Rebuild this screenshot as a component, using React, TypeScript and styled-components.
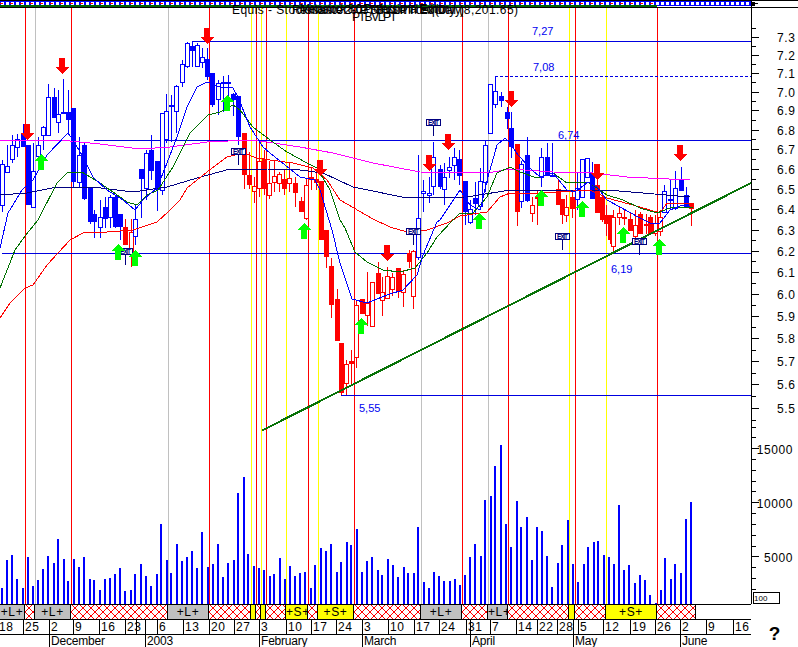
import React from "react";
import styled, { createGlobalStyle } from "styled-components";

const Global = createGlobalStyle`
  html, body { margin: 0; padding: 0; background: #fff; overflow: hidden; }
`;

const FONT = `"Liberation Sans", Arial, sans-serif`;
const PLOT_W = 751;
const PLOT_H = 604;
const BLUE = "#0000ff";
const LINE_BLUE = "#0000e0";
const RED = "#ff0000";
const NAVY = "#000080";
const LIME = "#00ff00";

type Kind = "b" | "o" | "r" | "p";
type Candle = [number, number, number, number, number, Kind];

const candles: Candle[] = [
  [2, 160, 212, 164, 205, "o"], [7, 145, 172, 166, 172, "o"], [12, 135, 163, 145, 159, "o"], [17, 134, 157, 139, 147, "o"],
  [23, 124, 147, 133, 147, "b"], [28, 145, 205, 145, 205, "b"], [33, 143, 207, 171, 207, "o"], [38, 137, 163, 145, 156, "o"],
  [43, 126, 150, 127, 135, "o"], [48, 84, 135, 97, 135, "o"], [54, 88, 118, 97, 118, "b"], [58, 90, 133, 114, 122, "o"],
  [63, 79, 113, 112, 113, "b"], [68, 90, 135, 112, 120, "b"], [73, 108, 188, 108, 182, "b"], [79, 137, 188, 155, 182, "o"],
  [84, 143, 200, 145, 199, "b"], [90, 187, 224, 187, 222, "b"], [94, 210, 238, 214, 222, "b"], [100, 200, 238, 217, 227, "o"],
  [105, 197, 228, 207, 219, "b"], [110, 195, 228, 197, 217, "o"], [115, 196, 228, 197, 227, "b"], [120, 214, 240, 214, 227, "b"],
  [125, 219, 245, 227, 245, "r"], [131, 219, 267, 232, 253, "p"], [135, 205, 245, 219, 236, "o"], [141, 170, 218, 169, 179, "b"],
  [146, 150, 200, 153, 188, "o"], [151, 135, 180, 150, 171, "b"], [157, 161, 211, 161, 190, "b"], [162, 113, 195, 113, 190, "o"],
  [166, 94, 143, 111, 139, "o"], [171, 95, 142, 105, 107, "b"], [176, 85, 133, 86, 111, "o"], [182, 60, 87, 64, 82, "o"],
  [187, 42, 68, 43, 66, "o"], [192, 42, 67, 46, 51, "b"], [197, 43, 67, 45, 66, "o"], [202, 48, 68, 57, 62, "o"],
  [207, 48, 80, 59, 77, "b"], [212, 73, 107, 73, 105, "b"], [218, 80, 115, 83, 99, "o"], [223, 76, 112, 82, 83, "b"],
  [228, 75, 100, 82, 83, "b"], [233, 93, 116, 94, 100, "b"], [238, 96, 145, 96, 137, "b"],
  [244, 133, 189, 133, 175, "r"], [249, 152, 189, 175, 185, "r"], [254, 177, 203, 186, 191, "p"], [259, 143, 197, 161, 188, "p"],
  [264, 150, 195, 159, 189, "r"], [269, 161, 199, 183, 195, "p"], [274, 161, 192, 176, 182, "p"], [279, 172, 192, 174, 183, "p"],
  [284, 170, 195, 179, 189, "r"], [289, 163, 192, 178, 183, "p"], [295, 177, 207, 183, 193, "r"], [301, 197, 212, 201, 212, "r"],
  [305.5, 178, 220, 185, 218, "p"], [311, 168, 190, 177, 180, "r"], [316, 170, 190, 179, 183, "r"], [321, 181, 240, 181, 240, "r"],
  [326, 230, 268, 230, 257, "r"], [331, 258, 318, 266, 305, "r"], [337, 289, 341, 299, 341, "r"], [341, 343, 395, 343, 393, "r"],
  [346, 360, 395, 364, 383, "p"], [351, 350, 384, 361, 364, "r"], [356, 300, 368, 305, 357, "p"], [362, 299, 314, 299, 314, "r"],
  [367, 272, 326, 303, 315, "p"], [372, 282, 326, 282, 326, "p"], [378, 262, 294, 273, 294, "r"], [382, 277, 316, 292, 300, "p"],
  [387, 267, 298, 276, 298, "p"], [392, 273, 296, 277, 289, "p"], [398, 268, 298, 268, 292, "r"], [403, 270, 307, 274, 292, "p"],
  [409, 250, 268, 253, 262, "r"], [413, 250, 309, 251, 296, "p"],
  [418, 155, 260, 218, 257, "o"], [423, 180, 212, 191, 193, "o"], [429, 177, 203, 193, 195, "o"], [433, 142, 195, 157, 186, "o"],
  [440, 165, 189, 169, 187, "b"], [444, 163, 205, 177, 189, "o"], [449, 157, 178, 167, 170, "o"], [454, 148, 180, 157, 165, "o"],
  [459, 150, 185, 159, 176, "b"], [465, 181, 225, 181, 212, "b"], [470, 200, 224, 209, 222, "o"], [475, 182, 215, 198, 204, "b"],
  [480, 168, 208, 181, 206, "o"], [485, 140, 192, 145, 182, "o"], [490, 84, 133, 84, 133, "o"], [495, 76, 108, 91, 104, "o"],
  [501, 92, 107, 96, 101, "b"], [507, 107, 129, 112, 119, "b"], [511, 112, 158, 128, 147, "b"],
  [517, 144, 226, 144, 212, "r"], [521, 161, 208, 164, 201, "o"], [527, 137, 202, 155, 201, "b"], [532, 197, 222, 205, 213, "p"],
  [537, 190, 225, 197, 199, "r"], [541, 148, 187, 157, 177, "o"], [547, 143, 176, 157, 176, "b"], [552, 143, 176, 175, 176, "o"],
  [558, 180, 205, 189, 205, "r"], [562, 199, 224, 199, 215, "r"], [566, 195, 222, 207, 215, "p"], [572, 190, 218, 197, 209, "r"],
  [577, 172, 210, 188, 199, "o"], [582, 159, 198, 159, 197, "o"], [587, 158, 178, 158, 177, "o"], [592, 162, 199, 173, 199, "b"],
  [597, 175, 213, 185, 213, "r"], [602, 190, 222, 197, 220, "r"], [606, 205, 236, 215, 224, "r"], [610, 215, 244, 215, 240, "r"],
  [613, 210, 252, 217, 246, "p"], [619, 207, 225, 213, 217, "p"], [624, 210, 225, 217, 218, "p"], [630, 212, 231, 219, 231, "r"],
  [635, 210, 245, 225, 236, "p"], [640, 212, 234, 214, 234, "r"], [646, 214, 234, 224, 225, "r"], [650, 215, 234, 217, 234, "r"],
  [655, 215, 236, 223, 233, "p"], [660, 210, 236, 217, 231, "p"], [664, 185, 212, 191, 212, "o"], [670, 180, 209, 199, 201, "b"],
  [675, 171, 210, 188, 208, "o"], [681, 167, 191, 179, 191, "b"], [686, 187, 207, 195, 207, "b"], [691, 203, 226, 203, 209, "r"],
];

const volume: [number, number[][]][] = [
  [0, [[5,384],[20,300],[35,285],[50,357],[68,384],[83,291],[98,378],[113,360],[128,327],[143,288],[161,309],[173,237],[191,297],[203,363],[221,297],[236,321],[251,291],[269,357],[281,360],[299,390],[314,357],[329,354],[344,342],[359,324],[374,393],[392,390],[404,342],[422,312],[437,348],[452,378],[470,342],[482,192],[500,300],[512,339],[530,252],[545,303],[560,291],[575,273],[590,324],[605,216],[623,321],[638,312],[653,252],[668,351],[683,309],[701,300],[714,99],[731,51],[743,283],[761,318],[776,324],[791,330]]],
  [260, [[29,348],[41,342],[59,294],[74,357],[89,318],[104,348],[119,339],[134,336],[152,384],[164,315],[182,264],[197,273],[212,252],[230,336],[242,306],[260,246],[272,255],[290,207],[305,336],[320,303],[335,291],[353,330],[365,345],[383,297],[398,315],[413,351],[431,321],[443,339],[461,339],[473,201],[491,366],[506,384],[521,336],[536,348],[551,364],[569,363],[584,357],[599,375],[614,345],[629,291],[644,252],[662,288],[674,120],[692,108],[704,18],[722,-45],[737,192],[752,261],[770,123],[782,201],[800,171]]],
  [520, [[35,300],[50,201],[65,213],[80,288],[95,381],[113,309],[125,255],[143,180],[158,312],[173,366],[191,312],[203,261],[221,246],[233,243],[251,285],[266,291],[281,312],[296,135],[311,330],[326,315],[344,369],[359,345],[374,360],[389,405],[407,430],[422,390],[434,294],[452,357],[464,312],[482,339],[497,177],[512,126]]],
];

const redLines = [25, 71, 209, 256, 266, 308, 354, 462, 508, 575, 657];
const yellowLines = [251, 261, 286, 318, 569, 606];
const grayLines = [35, 168, 421, 488];

const levels = [
  { y: 41.5, x: 192, label: "7,27", lx: 532, ly: 35 },
  { y: 76.5, x: 495, label: "7,08", lx: 533, ly: 71, dashed: true },
  { y: 140.5, x: 94, label: "6,74", lx: 558, ly: 139 },
  { y: 253.5, x: 2, label: "6,19", lx: 611, ly: 273 },
  { y: 395.5, x: 341, label: "5,55", lx: 359, ly: 412 },
];

const averages: { color: string; points: string }[] = [
  { color: "#ff00ff", points: "0,140 60,140 100,144 140,149 170,147 207,142 250,140 267,142 300,147 333,153 373,163 420,172 467,173 493,172 510,169 553,172 593,173 627,177 690,180" },
  { color: NAVY, points: "0,195 27,193 57,187 93,187 133,192 167,187 197,178 230,169 267,169 300,170 323,173 353,187 407,198 467,197 510,190 553,190 607,190 690,197" },
  { color: RED, points: "0,318 10,303 25,288 33,285 47,265 70,240 83,233 107,232 133,230 157,222 168,212 180,200 187,188 207,172 227,157 243,153 257,158 270,160 293,163 313,168 327,180 340,200 373,219 390,227 407,232 427,230 447,223 460,216 487,212 500,197 510,193 540,193 557,192 590,190 607,198 640,207 660,213 667,203 690,203" },
  { color: "#007000", points: "0,288 15,250 25,236 38,220 57,183 68,172 82,172 100,183 113,192 127,202 137,205 147,195 158,190 173,167 190,133 208,115 220,112 233,105 240,110 253,127 270,140 287,152 307,163 317,168 330,190 340,220 345,228 355,252 367,262 383,270 400,272 415,268 427,253 437,237 453,220 460,213 473,213 487,197 497,173 510,167 520,172 537,178 553,173 567,183 588,182 607,195 623,200 640,208 657,213 670,208 693,207" },
  { color: BLUE, points: "0,248 8,213 22,190 33,180 47,155 68,133 73,140 83,157 93,177 107,190 123,200 135,210 143,200 157,188 167,163 177,137 187,107 197,87 207,82 220,87 233,88 238,97 250,127 263,147 270,153 300,177 315,180 320,190 332,230 340,263 352,299 367,303 387,295 403,290 417,275 423,255 437,222 440,220 460,190 470,205 480,210 488,177 497,145 505,138 510,143 518,155 532,170 540,177 553,173 567,190 575,192 588,182 597,187 607,200 620,207 640,218 650,223 660,223 670,210 683,205 690,207" },
];

const downArrows: [number, number][] = [[27, 124], [62, 58], [207, 28], [320, 160], [429, 155], [448, 134], [387, 245], [511, 91], [597, 164], [680, 145]];
const upArrows: [number, number][] = [[41, 154], [227, 95], [118, 244], [135, 250], [304, 223], [361, 318], [479, 213], [541, 190], [582, 201], [623, 227], [659, 239]];
const exits: [number, number][] = [[238, 148], [125, 248], [433, 119], [413, 228], [562, 233], [639, 238]];

const priceY = (p: number) => 36.5 + 1312 * (Math.log(7.3) - Math.log(p));
const volumeY = (v: number) => 610.3 - (v / 1000) * 10.8;

type SegKind = "gray" | "hatch" | "yellow";
const segments: { end: number; kind: SegKind; label?: string }[] = [
  { end: 25, kind: "gray", label: "+L+" }, { end: 35, kind: "hatch" }, { end: 71, kind: "gray", label: "+L+" },
  { end: 168, kind: "hatch" }, { end: 209, kind: "gray", label: "+L+" }, { end: 251, kind: "hatch" },
  { end: 256, kind: "yellow" }, { end: 261, kind: "hatch" }, { end: 266, kind: "yellow" }, { end: 286, kind: "hatch" },
  { end: 308, kind: "yellow", label: "+S+" }, { end: 318, kind: "hatch" }, { end: 354, kind: "yellow", label: "+S+" },
  { end: 421, kind: "hatch" }, { end: 462, kind: "gray", label: "+L+" }, { end: 488, kind: "hatch" },
  { end: 508, kind: "gray", label: "+L+" }, { end: 569, kind: "hatch" }, { end: 575, kind: "yellow" },
  { end: 606, kind: "hatch" }, { end: 657, kind: "yellow", label: "+S+" }, { end: 696, kind: "hatch" },
];

const dayTicks: [number, string][] = [
  [0, "18"], [23, "25"], [49, "2"], [73, "9"], [99, "16"], [125, "23"], [136, ""], [145, ""], [157, "6"], [183, "13"],
  [209, "20"], [234, "27"], [259, "3"], [286, "10"], [311, "17"], [336, "24"], [362, "3"], [388, "10"], [414, "17"],
  [439, "24"], [466, "31"], [470, ""], [490, "7"], [516, "14"], [537, "22"], [557, "28"], [573, ""], [578, "5"],
  [603, "12"], [630, "19"], [655, "26"], [680, "2"], [706, "9"], [733, "16"],
];

const monthTicks: [number, string][] = [
  [0, ""], [49, "December"], [145, "2003"], [259, "February"], [362, "March"], [470, "April"], [573, "May"], [680, "June"],
];

const widthsFrom = (ticks: [number, string][]) =>
  ticks.map(([x, label], i) => ({ label, w: (i + 1 < ticks.length ? ticks[i + 1][0] : PLOT_W) - x }));

/* Page layout */
const Page = styled.div`
  width: 798px;
  height: 647px;
  overflow: hidden;
  display: grid;
  grid-template-columns: ${PLOT_W}px 47px;
  grid-template-rows: ${PLOT_H}px 43px;
  background: #fff;
  font-family: ${FONT};
  color: #000;
`;
const Plot = styled.svg`
  display: block;
  shape-rendering: crispEdges;
`;
const Axis = styled.svg`
  display: block;
  overflow: hidden;
  shape-rendering: crispEdges;
`;
const Footer = styled.div`
  display: flex;
  flex-direction: column;
`;
const SignalBand = styled.div`
  display: flex;
  height: 15px;
  box-sizing: border-box;
  border-top: 1px solid #000;
`;
const Segment = styled.div<{ $w: number; $kind: SegKind }>`
  width: ${(p) => p.$w}px;
  box-sizing: border-box;
  height: 14px;
  border-right: 1px solid #000;
  font-size: 12px;
  line-height: 14px;
  letter-spacing: 0.6px;
  text-align: center;
  white-space: nowrap;
  background-color: ${(p) => (p.$kind === "gray" ? "#c0c0c0" : p.$kind === "yellow" ? "#ffff00" : "#fff")};
  background-image: ${(p) =>
    p.$kind === "hatch"
      ? "linear-gradient(45deg, transparent 44%, #ff0000 44% 56%, transparent 56%), linear-gradient(-45deg, transparent 44%, #ff0000 44% 56%, transparent 56%)"
      : "none"};
  background-size: 8px 8px;
  background-position: 0 -1px;
`;
const DayRow = styled.div`
  display: flex;
  height: 15px;
  box-sizing: border-box;
  border-top: 1px solid #000;
`;
const DayCell = styled.div<{ $w: number }>`
  width: ${(p) => p.$w}px;
  box-sizing: border-box;
  height: 14px;
  border-left: 1px solid #000;
  padding-left: 1px;
  font-size: 12px;
  line-height: 15px;
  letter-spacing: 0.7px;
  white-space: nowrap;
  &:first-child { border-left: none; padding-left: 0; text-indent: -1px; }
`;
const MonthRow = styled.div`
  display: flex;
  height: 13px;
  border-top: 1px solid #000;
`;
const MonthCell = styled.div<{ $w: number }>`
  width: ${(p) => p.$w}px;
  box-sizing: border-box;
  height: 13px;
  border-left: 1px solid #000;
  padding-left: 1px;
  font-size: 12px;
  line-height: 13px;
  letter-spacing: -0.2px;
  white-space: nowrap;
  &:first-child { border-left: none; }
`;
const HelpCell = styled.div`
  display: flex;
  justify-content: center;
  align-items: flex-end;
  padding-bottom: 4px;
  font: bold 19px "Liberation Sans", sans-serif;
  line-height: 18px;
`;

/* Drawing parts */
const ChartLabel = styled.text`
  font: 11px ${FONT};
  fill: #0000f0;
`;
const TitleText = styled.text`
  font: 12px ${FONT};
  fill: #000;
`;
const AxisLabel = styled.text`
  font: 12px ${FONT};
  letter-spacing: 0.6px;
  fill: #000;
`;
const FlagText = styled.text`
  font: bold 6.5px ${FONT};
  fill: ${NAVY};
`;
const CornerText = styled.text`
  font: 8px ${FONT};
  fill: #000;
`;

const CandleMark: React.FC<{ c: Candle }> = ({ c: [x, hi, lo, top, bot, k] }) => {
  const color = k === "b" || k === "o" ? BLUE : RED;
  const filled = k === "b" || k === "r";
  const cx = Math.round(x) + 0.5;
  return (
    <g>
      <line x1={cx} x2={cx} y1={hi} y2={lo} stroke={color} />
      {filled ? (
        <rect x={cx - 2.5} y={top} width={5} height={Math.max(bot - top, 1.5)} fill={color} />
      ) : (
        <rect x={cx - 2} y={top + 0.5} width={4} height={Math.max(bot - top, 1)} fill="#fff" stroke={color} />
      )}
    </g>
  );
};

const DownArrow: React.FC<{ x: number; y: number }> = ({ x, y }) => (
  <polygon points={`${x - 3},${y} ${x + 3},${y} ${x + 3},${y + 9} ${x + 7},${y + 9} ${x},${y + 16} ${x - 7},${y + 9} ${x - 3},${y + 9}`} fill={RED} />
);
const UpArrow: React.FC<{ x: number; y: number }> = ({ x, y }) => (
  <polygon points={`${x},${y} ${x + 7},${y + 7} ${x + 3},${y + 7} ${x + 3},${y + 16} ${x - 3},${y + 16} ${x - 3},${y + 7} ${x - 7},${y + 7}`} fill={LIME} />
);
const ExitFlag: React.FC<{ x: number; y: number }> = ({ x, y }) => (
  <g>
    <line x1={x + 0.5} x2={x + 0.5} y1={y + 6} y2={y + 17} stroke={NAVY} strokeWidth={1.5} />
    <rect x={x - 6.5} y={y + 0.5} width={14} height={6} fill="#fff" stroke={NAVY} />
    <FlagText x={x - 5} y={y + 5.7} textLength={11}>EXIT</FlagText>
  </g>
);

const PriceChart: React.FC = () => (
  <Plot width={PLOT_W} height={PLOT_H} viewBox={`0 0 ${PLOT_W} ${PLOT_H}`}>
    {/* window strip */}
    <line x1={0} x2={PLOT_W} y1={0.5} y2={0.5} stroke="#000" />
    <rect x={0} y={1} width={PLOT_W} height={5} fill={BLUE} />
    <line x1={1} x2={PLOT_W} y1={3.5} y2={3.5} stroke="#fff" strokeWidth={3} strokeDasharray="3 2" />
    <line x1={0} x2={657} y1={3.5} y2={3.5} stroke={RED} strokeDasharray="3 7" />
    <line x1={0} x2={657} y1={6} y2={6} stroke="#006400" strokeWidth={2} />
    <line x1={0} x2={PLOT_W} y1={7.5} y2={7.5} stroke="#000" />

    {grayLines.map((x) => <line key={x} x1={x + 0.5} x2={x + 0.5} y1={8} y2={PLOT_H} stroke="#c0c0c0" />)}
    {yellowLines.map((x) => <line key={x} x1={x + 0.5} x2={x + 0.5} y1={8} y2={PLOT_H} stroke="#ffff00" />)}
    {redLines.map((x) => <line key={x} x1={x + 0.5} x2={x + 0.5} y1={8} y2={PLOT_H} stroke={RED} />)}

    <TitleText x={232} y={14} textLength={286}>Equis - Stockmaster - PTBVLPT Equity (8,201.65)</TitleText>
    <TitleText x={292} y={14} textLength={172}>Resistance 2003 Support Index (Daily)</TitleText>
    <TitleText x={300} y={13} textLength={150}>Metastock 8,0 Professional Edition</TitleText>
    <TitleText x={352} y={21} textLength={45}>PTBVLPT</TitleText>

    {levels.map((l) => (
      <g key={l.label}>
        <line x1={l.x} x2={PLOT_W} y1={l.y} y2={l.y} stroke={LINE_BLUE} strokeDasharray={l.dashed ? "3 2" : undefined} />
        <ChartLabel x={l.lx} y={l.ly}>{l.label}</ChartLabel>
      </g>
    ))}

    {candles.map((c) => <CandleMark key={c[0]} c={c} />)}
    {averages.map((a) => <polyline key={a.color} points={a.points} fill="none" stroke={a.color} />)}

    {volume.flatMap(([off, list]) =>
      list.map(([x, top]) => (
        <rect key={`${off}-${x}`} x={off + x / 3 - 1} y={460 + top / 3} width={2} height={PLOT_H - (460 + top / 3)} fill={BLUE} />
      ))
    )}

    <line x1={262} y1={430.5} x2={751} y2={183} stroke="#087308" strokeWidth={2} />
    {exits.map(([x, y]) => <ExitFlag key={x} x={x} y={y} />)}
    {downArrows.map(([x, y]) => <DownArrow key={x} x={x} y={y} />)}
    {upArrows.map(([x, y]) => <UpArrow key={x} x={x} y={y} />)}
  </Plot>
);

const priceTicks = Array.from({ length: 39 }, (_, i) => 5.45 + i * 0.05);
const volumeTicks = Array.from({ length: 16 }, (_, i) => (i + 2) * 1000);

const ScaleAxis: React.FC = () => (
  <Axis width={47} height={PLOT_H} viewBox={`0 0 47 ${PLOT_H}`}>
    <line x1={0} x2={47} y1={0.5} y2={0.5} stroke="#000" />
    <line x1={0} x2={47} y1={7.5} y2={7.5} stroke="#000" />
    <rect x={0} y={2} width={4} height={4} fill="#000" />
    <line x1={4} x2={7} y1={3.5} y2={3.5} stroke="#000" />
    <line x1={0.5} x2={0.5} y1={0} y2={PLOT_H} stroke="#000" />
    {priceTicks.map((p, i) => {
      const y = Math.round(priceY(p)) + 0.5;
      const major = i % 2 === 1;
      return <line key={p} x1={1} x2={major ? 8 : 5} y1={y} y2={y} stroke="#000" />;
    })}
    {priceTicks.filter((_, i) => i % 2 === 1).map((p) => (
      <AxisLabel key={p} x={26} y={priceY(p) + 5}>{p.toFixed(1)}</AxisLabel>
    ))}
    {volumeTicks.map((v) => {
      const y = Math.round(volumeY(v)) + 0.5;
      return <line key={v} x1={1} x2={v % 5000 === 0 ? 8 : 5} y1={y} y2={y} stroke="#000" />;
    })}
    {[15000, 10000, 5000].map((v) => (
      <AxisLabel key={v} x={42} y={volumeY(v) + 6} textAnchor="end">{v}</AxisLabel>
    ))}
    <rect x={2.5} y={592.5} width={26} height={11} fill="#fff" stroke="#000" />
    <CornerText x={3} y={601}>100</CornerText>
  </Axis>
);

export default function App() {
  let prev = 0;
  return (
    <Page>
      <Global />
      <PriceChart />
      <ScaleAxis />
      <Footer>
        <SignalBand>
          {segments.map((s) => {
            const w = s.end - prev;
            prev = s.end;
            return <Segment key={s.end} $w={w} $kind={s.kind}>{s.label}</Segment>;
          })}
        </SignalBand>
        <DayRow>
          {widthsFrom(dayTicks).map((d, i) => <DayCell key={i} $w={d.w}>{d.label}</DayCell>)}
        </DayRow>
        <MonthRow>
          {widthsFrom(monthTicks).map((m, i) => <MonthCell key={i} $w={m.w}>{m.label}</MonthCell>)}
        </MonthRow>
      </Footer>
      <HelpCell>?</HelpCell>
    </Page>
  );
}
